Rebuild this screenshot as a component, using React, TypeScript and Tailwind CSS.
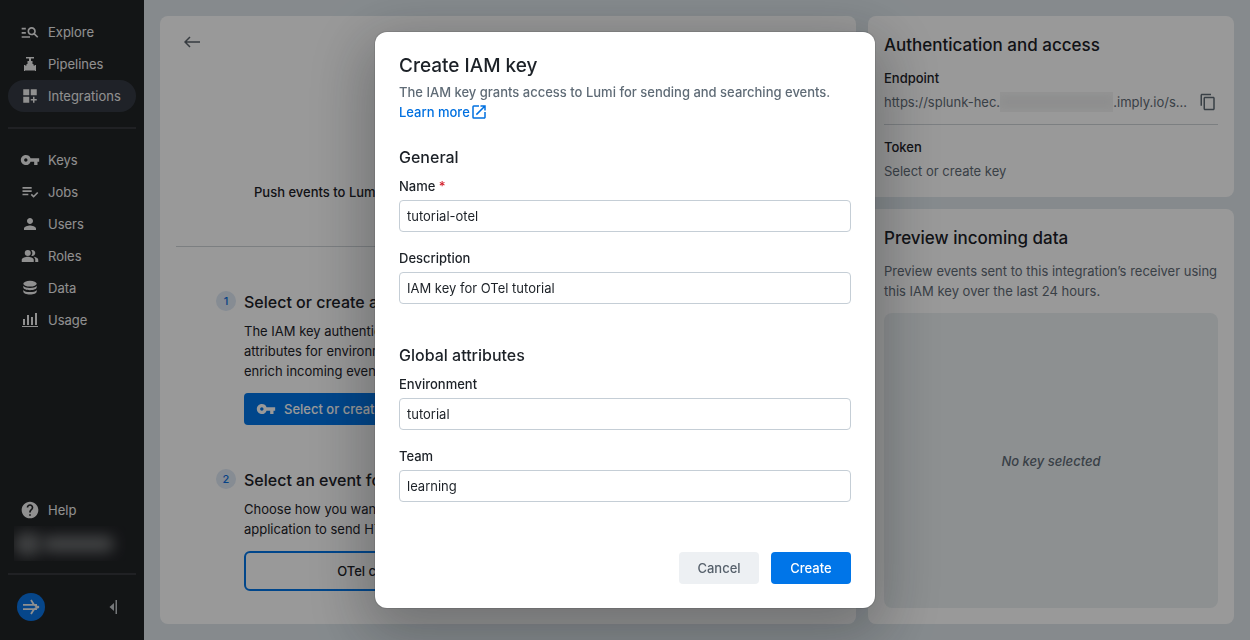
import { useState, type ReactNode } from "react";
import {
  MdDashboardCustomize,
  MdHelp,
  MdManageSearch,
  MdOpenInNew,
  MdOutlineContentCopy,
  MdPeopleAlt,
  MdPerson,
  MdPlaylistAddCheck,
  MdVpnKey,
} from "react-icons/md";

function ValveIcon() {
  return (
    <svg viewBox="0 0 16 16" className="h-4 w-4" fill="currentColor" aria-hidden="true">
      <path d="M4 1h8v1.500H9V5h1.500v3h1v1.500H13V9h1v6h-1v-.5H3v.5H2V9h1v.5h1.500V8h1V5H7V2.500H4z" />
    </svg>
  );
}

function DatabaseIcon() {
  return (
    <svg viewBox="0 0 16 16" className="h-4 w-4" fill="currentColor" aria-hidden="true">
      <ellipse cx="8" cy="3.700" rx="6.700" ry="2.900" />
      <path d="M1.300 5.800C2.300 7.300 5 8 8 8s5.700-.7 6.700-2.200v1.500C14.700 9 11.700 10.200 8 10.200S1.300 9 1.300 7.300z" />
      <path d="M1.300 9.900C2.300 11.400 5 12.100 8 12.100s5.700-.7 6.700-2.200v1.700c0 1.700-3 3-6.700 3s-6.700-1.300-6.700-3z" />
    </svg>
  );
}

function UsageIcon() {
  return (
    <svg viewBox="0 0 16 16" className="h-4 w-4" fill="currentColor" aria-hidden="true">
      <path d="M1 7h2v6H1zM5 3h2v10H5zM9 5h2v8H9zM13 1h2v12h-2zM0 14h16v1H0z" />
    </svg>
  );
}

function NavItem({ icon, label, active }: { icon: ReactNode; label: string; active?: boolean }) {
  return (
    <a
      href="#"
      aria-current={active ? "page" : undefined}
      className={`flex h-8 items-center rounded-full px-3 ${active ? "bg-[#343a43]" : ""}`}
    >
      <span className="grid w-5 shrink-0 place-items-center">{icon}</span>
      <span className="ml-2">{label}</span>
    </a>
  );
}

function Sidebar() {
  return (
    <aside className="flex w-36 shrink-0 flex-col bg-[#212326] px-2 pt-4 pb-[17px] text-[13px] text-[#f0f0f0]">
      <nav>
        <NavItem icon={<MdManageSearch size={20} />} label="Explore" />
        <NavItem icon={<ValveIcon />} label="Pipelines" />
        <NavItem icon={<MdDashboardCustomize size={18} />} label="Integrations" active />
        <hr className="my-[15px] border-t-2 border-[#36383d]" />
        <NavItem icon={<MdVpnKey size={20} />} label="Keys" />
        <NavItem icon={<MdPlaylistAddCheck size={20} />} label="Jobs" />
        <NavItem icon={<MdPerson size={18} />} label="Users" />
        <NavItem icon={<MdPeopleAlt size={18} />} label="Roles" />
        <NavItem icon={<DatabaseIcon />} label="Data" />
        <NavItem icon={<UsageIcon />} label="Usage" />
      </nav>
      <div className="mt-auto">
        <NavItem icon={<MdHelp size={20} />} label="Help" />
        <div className="ml-[6px] flex h-[35px] w-28 items-center overflow-hidden">
          <div className="h-6 w-7 rounded-full bg-[#6c6e70] blur-[7px]" />
          <div className="h-4 w-18 rounded-full bg-[#727476] blur-[7px]" />
        </div>
        <hr className="mt-3 border-t-2 border-[#36383d]" />
        <div className="mt-4 flex h-8 items-center justify-between px-[9px]">
          <svg viewBox="0 0 28 28" className="h-7 w-7" aria-label="Imply">
            <circle cx="14" cy="14" r="14" fill="#0b75e6" />
            <path
              d="M6 11.800h14M6 16.200h14M14 7l2.500 4c1.200 1.700 2.800 2.600 5.500 3-2.700.4-4.300 1.300-5.500 3L14 21"
              fill="none"
              stroke="#f0f0f0"
              strokeWidth="1.800"
            />
          </svg>
          <button type="button" aria-label="Collapse sidebar" className="pr-2 text-[#c4c8cc]">
            <svg viewBox="0 0 12 16" className="h-4 w-3" fill="currentColor">
              <path d="M7 4v8L2.500 8zM8.500 1H10v14H8.500z" />
            </svg>
          </button>
        </div>
      </div>
    </aside>
  );
}

function Step({ n, title, children }: { n: number; title: string; children: ReactNode }) {
  return (
    <section className="mt-11 flex gap-2">
      <span className="grid h-5 w-5 shrink-0 place-items-center rounded-full bg-[#dfe9f6] text-[11px] font-medium text-[#0b6fe0]">
        {n}
      </span>
      <div className="min-w-0 flex-1">
        <h3 className="text-base leading-[22px] font-medium">{title}</h3>
        {children}
      </div>
    </section>
  );
}

function IntegrationPanel() {
  return (
    <main className="min-w-0 flex-1 rounded-lg bg-white p-4">
      <header className="border-b border-[#cfd4d8] pb-11">
        <button type="button" aria-label="Back" className="flex h-5 items-center px-2 text-[#5b636b]">
          <svg
            viewBox="0 0 16 16"
            className="h-4 w-4"
            fill="none"
            stroke="currentColor"
            strokeWidth="1.500"
          >
            <path d="M16 8H1M6 3L1 8l5 5" />
          </svg>
        </button>
        <p className="mx-auto mt-[130px] max-w-[508px] font-medium">Push events to Lumi</p>
      </header>
      <div className="mx-auto max-w-[584px]">
        <Step n={1} title="Select or create a key">
          <p className="mt-2">
            The IAM key authenticates
            <br />
            attributes for environment
            <br />
            enrich incoming events.
          </p>
          <button
            type="button"
            className="mt-3 flex h-8 items-center gap-2 rounded bg-[#0075e8] px-3 font-medium text-white"
          >
            <MdVpnKey size={20} />
            Select or create key
          </button>
        </Step>
        <Step n={2} title="Select an event format">
          <p className="mt-2">
            Choose how you want your
            <br />
            application to send HTTP
          </p>
          <div className="mt-3 grid grid-cols-2 gap-3">
            <button type="button" className="h-10 rounded-md border-2 border-[#0075e8] font-medium">
              OTel collector
            </button>
          </div>
        </Step>
      </div>
    </main>
  );
}

function DetailsColumn() {
  return (
    <div className="flex w-[366px] shrink-0 flex-col gap-3">
      <section className="rounded-lg bg-white p-4">
        <h2 className="text-[17px] leading-[26px] font-medium">Authentication and access</h2>
        <h3 className="mt-[10px] font-medium">Endpoint</h3>
        <div className="mt-1 flex h-5 items-center text-[#5f6b76]">
          <span>https://splunk-hec.</span>
          <span className="flex h-5 min-w-0 flex-1 items-center overflow-hidden bg-[#f5f5f5]">
            <span className="h-2 w-full bg-[#e8e9ea] blur-[4px]" />
          </span>
          <span>.imply.io/s...</span>
          <button type="button" aria-label="Copy endpoint" className="ml-3 pr-px">
            <MdOutlineContentCopy size={18} />
          </button>
        </div>
        <hr className="mt-3 border-[#cfd4d8]" />
        <h3 className="mt-3 font-medium">Token</h3>
        <p className="mt-1 text-[#5f6b76]">Select or create key</p>
      </section>
      <section className="flex flex-1 flex-col rounded-lg bg-white p-4">
        <h2 className="text-[17px] leading-[26px] font-medium">Preview incoming data</h2>
        <p className="mt-[10px] text-[#5f6b76]">
          Preview events sent to this integration’s receiver using this IAM key over the last 24 hours.
        </p>
        <div className="mt-3 grid flex-1 place-items-center rounded-lg bg-[#ebf0f2] font-medium text-[#5f6b76] italic">
          No key selected
        </div>
      </section>
    </div>
  );
}

function Field({ id, label, initial, required }: { id: string; label: string; initial: string; required?: boolean }) {
  const [value, setValue] = useState(initial);
  return (
    <div>
      <label htmlFor={id} className="block font-medium">
        {label}
        {required && <span className="text-[#d3212d]"> *</span>}
      </label>
      <input
        id={id}
        value={value}
        required={required}
        onChange={(e) => setValue(e.target.value)}
        className="mt-1 block h-8 w-full rounded border border-[#c5ced6] bg-white px-[7px] text-[#1c2127] outline-none focus:border-[#0075e8]"
      />
    </div>
  );
}

function CreateKeyDialog() {
  return (
    <div className="fixed inset-0 flex items-start justify-center overflow-auto bg-black/40 py-8">
      <form
        role="dialog"
        aria-modal="true"
        aria-labelledby="dialog-title"
        onSubmit={(e) => e.preventDefault()}
        className="w-[500px] max-w-full rounded-xl bg-white p-6 shadow-[0_0_0_1px_rgba(17,20,24,0.1),0_18px_60px_10px_rgba(17,20,24,0.3)]"
      >
        <h1 id="dialog-title" className="text-[19px] leading-5 font-medium">
          Create IAM key
        </h1>
        <p className="mt-[6px] font-medium text-[#5f6b76]">
          The IAM key grants access to Lumi for sending and searching events.
        </p>
        <a href="#" className="flex h-5 w-fit items-center font-medium text-[#0070e0]">
          Learn more
          <MdOpenInNew size={18} />
        </a>
        <section className="mt-6">
          <h2 className="text-base leading-[22px] font-medium">General</h2>
          <div className="mt-2 grid gap-4">
            <Field id="name" label="Name" initial="tutorial-otel" required />
            <Field id="description" label="Description" initial="IAM key for OTel tutorial" />
          </div>
        </section>
        <section className="mt-10">
          <h2 className="text-base leading-[22px] font-medium">Global attributes</h2>
          <div className="mt-2 grid gap-4">
            <Field id="environment" label="Environment" initial="tutorial" />
            <Field id="team" label="Team" initial="learning" />
          </div>
        </section>
        <footer className="mt-[50px] flex justify-end gap-3">
          <button type="button" className="h-8 w-20 rounded bg-[#edf0f3] font-medium text-[#56606b]">
            Cancel
          </button>
          <button type="submit" className="h-8 w-20 rounded bg-[#0075e8] font-medium text-white">
            Create
          </button>
        </footer>
      </form>
    </div>
  );
}

export default function App() {
  return (
    <div className="flex min-h-screen bg-[#dfe7ec] font-['Inter',sans-serif] text-[13px] leading-5 text-[#1c2127]">
      <Sidebar />
      <div className="flex min-w-0 flex-1 gap-3 p-4">
        <IntegrationPanel />
        <DetailsColumn />
      </div>
      <CreateKeyDialog />
    </div>
  );
}
